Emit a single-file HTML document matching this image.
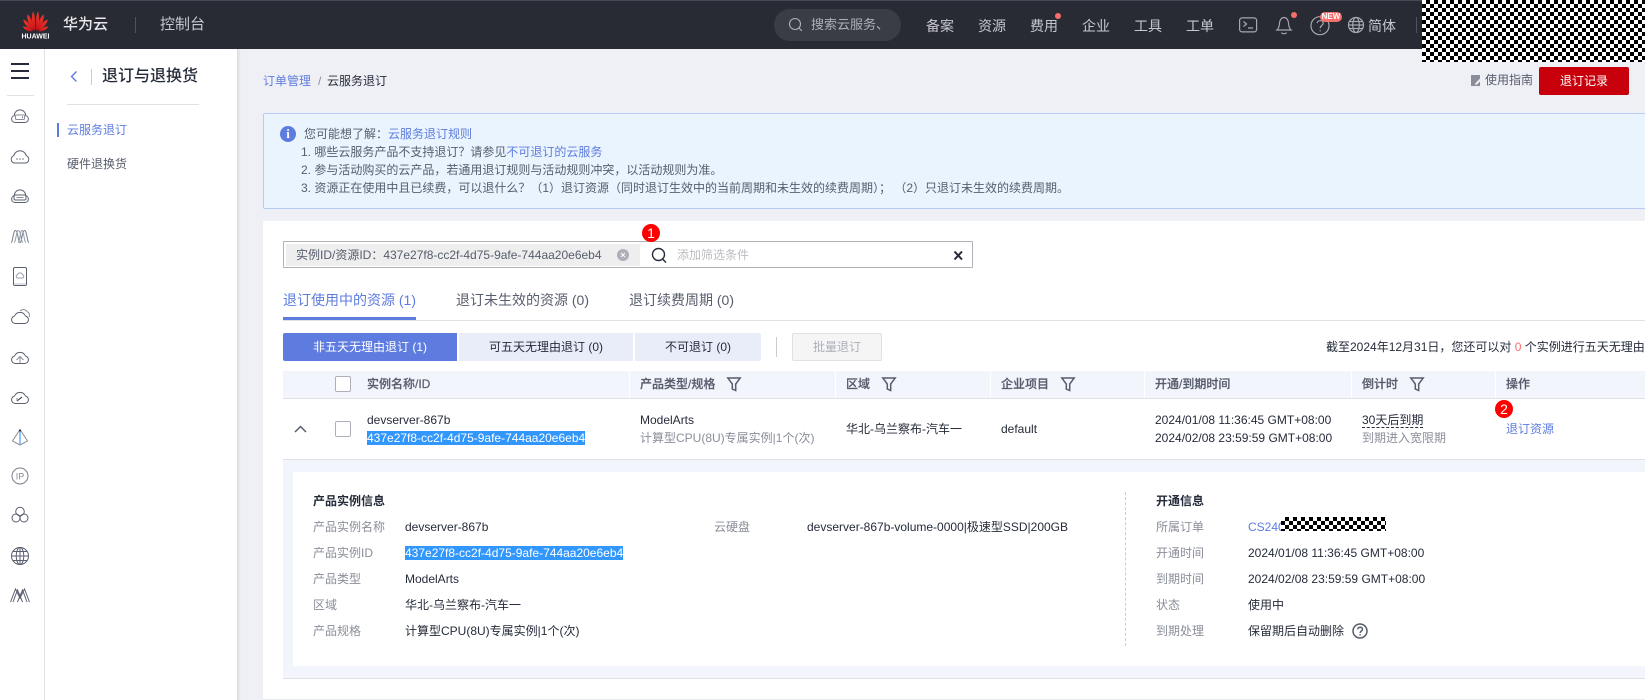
<!DOCTYPE html>
<html lang="zh"><head><meta charset="utf-8"><title>退订与退换货</title>
<style>
*{box-sizing:border-box}
html,body{margin:0;padding:0;width:1645px;height:700px;overflow:hidden;background:#eff0f5;font-family:"Liberation Sans","Noto Sans CJK SC",sans-serif;font-size:12px;color:#252b3a}
.a{position:absolute}
.t{position:absolute;white-space:nowrap;line-height:20px;font-size:12px}
.n{color:#c6c8ce;font-size:14px;top:16px}
.g{color:#8a8e99}
.l{color:#5e7ce0}
.h{color:#575d6c;font-weight:500;top:374px;-webkit-text-stroke:.2px #575d6c}
.s{background:#3297fd;color:#fff;line-height:14px;height:14px;position:absolute;white-space:nowrap;font-size:12px;overflow:hidden}
.chk{position:absolute;width:16px;height:16px;border:1px solid #adb0b8;border-radius:2px;background:#fff}
.sep{position:absolute;top:371px;width:1px;height:27px;background:#fff}
.bd{position:absolute;width:18px;height:18px;border-radius:50%;background:#f00;color:#fff;text-align:center;line-height:18px;font-size:14px;font-weight:400}
.chkr{background:repeating-conic-gradient(#000 0 25%,#fff 0 50%) 0 0/8px 8px}
.f{position:absolute;top:377px}
svg{position:absolute;overflow:visible}
</style></head><body>

<!-- header -->
<div class="a" style="left:0;top:0;width:1645px;height:49px;background:#282b33;border-top:1px solid #454852"></div>
<svg style="left:0;top:0" width="60" height="49">
<defs><linearGradient id="hw" x1="0" y1="0" x2="0" y2="1"><stop offset="0" stop-color="#ef3b2c"/><stop offset="1" stop-color="#c3121a"/></linearGradient></defs>
<g fill="url(#hw)" transform="translate(35.5 31)">
<path d="M-.6 0C-3.8-5-4.6-12-2.6-19.5-.4-17-.1-8-.6 0z"/>
<path d="M.6 0C3.8-5 4.6-12 2.6-19.5.4-17 .1-8 .6 0z"/>
<path d="M-1.6-.5C-6.2-4-8.6-10-8.2-16.5-4.6-14.5-2-6-1.6-.5z"/>
<path d="M1.6-.5C6.2-4 8.6-10 8.2-16.5 4.6-14.5 2-6 1.6-.5z"/>
<path d="M-2.4-.2C-7-2-11-6-12.4-11.5-8-10.5-4-4-2.4-.2z"/>
<path d="M2.4-.2C7-2 11-6 12.4-11.5 8-10.5 4-4 2.4-.2z"/>
<path d="M-3 .2C-7 .8-11-1-12.8-4.5-9-4.6-5-2-3 .2z"/>
<path d="M3 .2C7 .8 11-1 12.8-4.5 9-4.6 5-2 3 .2z"/>
</g>
<text x="35.5" y="38.5" fill="#fff" font-size="7" font-weight="700" text-anchor="middle" font-family="Liberation Sans">HUAWEI</text>
</svg>
<div class="t" style="left:63px;top:15px;font-size:15px;color:#e8e9ec;font-weight:500">华为云</div>
<div class="a" style="left:135px;top:17px;width:1px;height:16px;background:#50535c"></div>
<div class="t" style="left:160px;top:15px;font-size:15px;color:#c6c8ce">控制台</div>

<div class="a" style="left:774px;top:9px;width:127px;height:32px;border-radius:16px;background:#3a3d46"></div>
<svg style="left:788px;top:17px" width="16" height="16" fill="none" stroke="#b0b2b8" stroke-width="1.1"><circle cx="7" cy="7" r="5.5"/><path d="M11 11l3 3"/></svg>
<div class="t" style="left:811px;top:15px;font-size:13px;color:#adb0b8">搜索云服务、</div>
<div class="t n" style="left:926px">备案</div>
<div class="t n" style="left:978px">资源</div>
<div class="t n" style="left:1030px">费用</div>
<div class="a" style="left:1055px;top:13px;width:6px;height:6px;border-radius:50%;background:#f66f6a"></div>
<div class="t n" style="left:1082px">企业</div>
<div class="t n" style="left:1134px">工具</div>
<div class="t n" style="left:1186px">工单</div>
<svg style="left:1235px;top:5px" width="135" height="40" fill="none" stroke="#a6a8ae" stroke-width="1.2">
<rect x="4.6" y="12.9" width="17" height="14" rx="2.5"/><path d="M8.5 16.500l3 2.500-3 2.500M13 23h5"/>
<path d="M42 25h14c-2-1.500-2.300-4-2.500-7-.2-3-2-5.500-4.500-5.500s-4.300 2.500-4.500 5.500c-.2 3-.5 5.500-2.500 7zM46.500 27.500c.5 1.600 4.500 1.600 5 0"/>
<circle cx="85" cy="20.700" r="9"/><path d="M82.200 18.200c.3-3.500 6-3.500 6 0 0 2.300-3 2.300-3 5M85.200 25.200v1.200"/>
<circle cx="121" cy="20" r="7.500"/><ellipse cx="121" cy="20" rx="3.300" ry="7.500"/><path d="M113.500 20h15M114.500 16.500h13M114.500 23.500h13"/>
</svg>
<div class="a" style="left:1291px;top:12px;width:6px;height:6px;border-radius:50%;background:#f66f6a"></div>
<div class="a" style="left:1320px;top:12px;width:22px;height:10px;border-radius:5px;background:#f66f6a;color:#fff;font-size:8px;font-weight:700;line-height:10px;text-align:center">NEW</div>
<div class="t n" style="left:1368px">简体</div>
<div class="a" style="left:1416px;top:17px;width:1px;height:16px;background:#50535c"></div>
<div class="a chkr" style="left:1422px;top:0;width:223px;height:62px"></div>

<!-- rail + sidebar -->
<div class="a" style="left:0;top:49px;width:237px;height:651px;background:#fff"></div>
<div class="a" style="left:237px;top:49px;width:4px;height:651px;background:linear-gradient(90deg,#dcdde3,#eff0f5)"></div>
<div class="a" style="left:44px;top:49px;width:1px;height:651px;background:#dfe1e6"></div>
<div class="a" style="left:11px;top:63px;width:18px;height:2px;background:#252b3a"></div>
<div class="a" style="left:11px;top:70px;width:18px;height:2px;background:#252b3a"></div>
<div class="a" style="left:11px;top:77px;width:18px;height:2px;background:#252b3a"></div>
<div class="a" style="left:7px;top:95px;width:27px;height:1px;background:#dfe1e6"></div>

<svg style="left:0;top:0" width="44" height="700" fill="none" stroke="#5a6070" stroke-width="1">
<g transform="translate(11 109)"><path d="M4 13.500a3.500 3.500 0 0 1-.7-6.900a5.700 5.700 0 0 1 11.400 0a3.500 3.500 0 0 1-.7 6.900z"/><rect x="4.500" y="6" width="9" height="4.500" rx="1" stroke="#8a8e99"/><path d="M11 8.200h1" stroke="#252b3a"/></g>
<g transform="translate(10 149.500)"><path d="M4.500 13.500a3.800 3.800 0 0 1-.8-7.300a6.500 6.500 0 0 1 12.600 0a3.800 3.800 0 0 1-.8 7.300z"/><path d="M6.500 9.500h1M9.500 9.500h1M12.500 9.500h1" stroke-width="1.500"/></g>
<g transform="translate(11 189)"><path d="M4 13.500a3.500 3.500 0 0 1-.7-6.900a5.700 5.700 0 0 1 11.400 0a3.500 3.500 0 0 1-.7 6.900z"/><rect x="3" y="6" width="12" height="5" rx="1.500"/><path d="M5.500 8.500h7" stroke="#8a8e99"/></g>
<g transform="translate(11 229.500)" stroke="#7a8090"><path d="M0 13C2 13 2 1 4.500 1S7 13 9 13 11 1 13.500 1 16 13 18 13"/><path d="M3 13C5 13 5 1 7.500 1S10 13 12 13" stroke="#9aa0b0"/><path d="M7 13C9 13 9 1 11 1S13 13 15 13" stroke="#9aa0b0"/></g>
<g transform="translate(13 267)"><rect x=".5" y=".5" width="13" height="18" rx="1.500"/><path d="M4.500 11a1.700 1.700 0 0 1 0-3.300 2.600 2.600 0 0 1 5 0 1.700 1.700 0 0 1 0 3.300z" stroke="#9aa0b0"/><path d="M1 16h12v2H1z" fill="#dfe1e6" stroke="none"/></g>
<g transform="translate(11 309)"><path d="M4 14.500a3.800 3.800 0 0 1-.4-7.500 5.800 5.800 0 0 1 10.800 0 3.800 3.800 0 0 1-.4 7.500z"/><path d="M9 2c3-2.500 6-1.500 7.500 1 2 .8 2.500 3 1.500 5" stroke="#8a8e99"/></g>
<g transform="translate(11 349)"><path d="M4 14.500a3.800 3.800 0 0 1-.4-7.500 5.800 5.800 0 0 1 10.800 0 3.800 3.800 0 0 1-.4 7.500z"/><path d="M9 14.500V8M5.500 11L9 7.500l3.500 3.500" stroke="#8a8e99"/></g>
<g transform="translate(11 389)"><path d="M4 14.500a3.800 3.800 0 0 1-.4-7.500 5.800 5.800 0 0 1 10.800 0 3.800 3.800 0 0 1-.4 7.500z"/><path d="M6 12l5-4" stroke="#252b3a"/><path d="M6 9v3" stroke="#8a8e99"/></g>
<g transform="translate(12 429)"><path d="M8 0.500L.5 12 8 16l7.500-4z" stroke="#8a8e99"/><path d="M8 1v14" stroke="#4a9bef" stroke-width="1.200"/><circle cx="8" cy="1.500" r="1" fill="#252b3a" stroke="none"/></g>
<circle cx="20" cy="476" r="8" stroke="#7a8090"/>
<text x="20" y="479.500" text-anchor="middle" font-size="9" fill="#8a8e99" stroke="none" font-family="Liberation Sans">IP</text>
<circle cx="20" cy="511.500" r="4.300"/><circle cx="16" cy="518" r="4"/><circle cx="24" cy="518" r="4"/>
<g><circle cx="20" cy="556" r="8.500"/><ellipse cx="20" cy="556" rx="3.800" ry="8.500"/><path d="M11.500 556h17M13 551.500h14M13 560.500h14M20 547.500v17"/></g>
<path d="M10.500 602L15.500 589l4.500 9 4.500-9 5 13M13 602L17.500 590l5 12M27 602l-4.500-12-5 12" stroke="#5a6070"/>
</svg>

<svg style="left:70px;top:70px" width="10" height="14" fill="none" stroke="#5e7ce0" stroke-width="1.400"><path d="M6.500 1.500L1.500 6.500l5 5"/></svg>
<div class="a" style="left:91px;top:69px;width:1px;height:16px;background:#c9ccd2"></div>
<div class="t" style="left:102px;top:67px;font-size:16px;color:#252b3a;font-weight:500">退订与退换货</div>
<div class="a" style="left:67px;top:104px;width:132px;height:1px;background:#dfe1e6"></div>
<div class="a" style="left:57px;top:123px;width:2px;height:14px;background:#5e7ce0"></div>
<div class="t l" style="left:67px;top:120px">云服务退订</div>
<div class="t" style="left:67px;top:154px;color:#575d6c">硬件退换货</div>

<!-- main top -->
<div class="t l" style="left:263px;top:71px">订单管理</div>
<div class="t g" style="left:318px;top:71px">/</div>
<div class="t" style="left:327px;top:71px">云服务退订</div>
<svg style="left:1470px;top:74px" width="12" height="13"><path d="M1 1h9v3.500L5.500 9 5 11l2-.5 3-3V12H1z" fill="#8a8e99"/></svg>
<div class="t" style="left:1485px;top:70px;color:#575d6c">使用指南</div>
<div class="a" style="left:1539px;top:67px;width:90px;height:28px;background:#c7000b;color:#fff;text-align:center;line-height:28px;border-radius:2px">退订记录</div>

<!-- alert -->
<div class="a" style="left:263px;top:113px;width:1382px;height:96px;background:#e9f4ff;border:1px solid #b9cbf5;border-right:none;border-radius:2px 0 0 2px"></div>
<div class="a" style="left:280px;top:126px;width:16px;height:16px;border-radius:50%;background:#5e7ce0;color:#fff;font:700 13px/16px 'Liberation Serif',serif;text-align:center">i</div>
<div class="t" style="left:304px;top:124px;color:#575d6c">您可能想了解：<span class="l">云服务退订规则</span></div>
<div class="t" style="left:301px;top:142px;color:#575d6c">1. 哪些云服务产品不支持退订？请参见<span class="l">不可退订的云服务</span></div>
<div class="t" style="left:301px;top:160px;color:#575d6c">2. 参与活动购买的云产品，若通用退订规则与活动规则冲突，以活动规则为准。</div>
<div class="t" style="left:301px;top:178px;color:#575d6c">3. 资源正在使用中且已续费，可以退什么？（1）退订资源（同时退订生效中的当前周期和未生效的续费周期）； （2）只退订未生效的续费周期。</div>

<!-- panel -->
<div class="a" style="left:263px;top:221px;width:1382px;height:479px;background:#fff"></div>
<div class="a" style="left:283px;top:241px;width:690px;height:27px;border:1px solid #b0b2b8;border-radius:1px;background:#fff"></div>
<div class="a" style="left:286px;top:244px;width:354px;height:22px;background:#eeeeee"></div>
<div class="t" style="left:296px;top:245px;color:#575d6c">实例ID/资源ID：437e27f8-cc2f-4d75-9afe-744aa20e6eb4</div>
<svg style="left:617px;top:249px" width="12" height="12"><circle cx="6" cy="6" r="6" fill="#adb0b8"/><path d="M4 4l4 4M8 4l-4 4" stroke="#fff" stroke-width="1"/></svg>
<svg style="left:651px;top:247px" width="17" height="17" fill="none" stroke="#252b3a" stroke-width="1.400"><circle cx="7.500" cy="7.500" r="6"/><path d="M11.500 12l3.500 3.500"/></svg>
<div class="t" style="left:677px;top:245px;color:#bbbdc2">添加筛选条件</div>
<svg style="left:953px;top:250px" width="11" height="11" stroke="#252b3a" stroke-width="2"><path d="M1.500 1.500l7.500 8M9 1.500l-7.500 8"/></svg>
<div class="bd" style="left:642px;top:224px">1</div>

<div class="t" style="left:283px;top:290px;font-size:14px;color:#5e7ce0">退订使用中的资源 (1)</div>
<div class="t" style="left:456px;top:290px;font-size:14px;color:#575d6c">退订未生效的资源 (0)</div>
<div class="t" style="left:629px;top:290px;font-size:14px;color:#575d6c">退订续费周期 (0)</div>
<div class="a" style="left:283px;top:320px;width:1362px;height:1px;background:#dfe1e6"></div>
<div class="a" style="left:283px;top:317px;width:133px;height:3px;background:#5e7ce0"></div>

<div class="a" style="left:283px;top:333px;width:174px;height:28px;background:#5e7ce0;color:#fff;text-align:center;line-height:28px;border-radius:2px 0 0 2px">非五天无理由退订 (1)</div>
<div class="a" style="left:459px;top:333px;width:174px;height:28px;background:#e9edfa;color:#252b3a;text-align:center;line-height:28px">可五天无理由退订 (0)</div>
<div class="a" style="left:635px;top:333px;width:126px;height:28px;background:#e9edfa;color:#252b3a;text-align:center;line-height:28px;border-radius:0 2px 2px 0">不可退订 (0)</div>
<div class="a" style="left:776px;top:337px;width:1px;height:20px;background:#c9ccd2"></div>
<div class="a" style="left:792px;top:333px;width:90px;height:28px;background:#f5f5f6;border:1px solid #dfe1e6;color:#adb0b8;text-align:center;line-height:26px;border-radius:2px">批量退订</div>
<div class="t" style="left:1326px;top:337px;color:#252b3a">截至2024年12月31日，您还可以对 <span style="color:#f66f6a">0</span> 个实例进行五天无理由退订</div>

<!-- table head -->
<div class="a" style="left:283px;top:371px;width:1362px;height:27px;background:#f2f5fc"></div>
<div class="a" style="left:283px;top:398px;width:1362px;height:1px;background:#dfe1e6"></div>
<div class="sep" style="left:629px"></div><div class="sep" style="left:835px"></div><div class="sep" style="left:990px"></div><div class="sep" style="left:1144px"></div><div class="sep" style="left:1351px"></div><div class="sep" style="left:1495px"></div>
<div class="chk" style="left:335px;top:376px"></div>
<div class="t h" style="left:367px">实例名称/ID</div>
<div class="t h" style="left:640px">产品类型/规格</div>
<div class="t h" style="left:846px">区域</div>
<div class="t h" style="left:1001px">企业项目</div>
<div class="t h" style="left:1155px">开通/到期时间</div>
<div class="t h" style="left:1362px">倒计时</div>
<div class="t h" style="left:1506px">操作</div>
<svg class="f" style="left:727px" width="14" height="15" fill="none" stroke="#575d6c" stroke-width="1.500"><path d="M.8 1h12.400L8.700 7v6.500L5.300 12V7z"/></svg>
<svg class="f" style="left:882px" width="14" height="15" fill="none" stroke="#575d6c" stroke-width="1.500"><path d="M.8 1h12.400L8.700 7v6.500L5.300 12V7z"/></svg>
<svg class="f" style="left:1061px" width="14" height="15" fill="none" stroke="#575d6c" stroke-width="1.500"><path d="M.8 1h12.400L8.700 7v6.500L5.300 12V7z"/></svg>
<svg class="f" style="left:1410px" width="14" height="15" fill="none" stroke="#575d6c" stroke-width="1.500"><path d="M.8 1h12.400L8.700 7v6.500L5.300 12V7z"/></svg>

<!-- row -->
<svg style="left:294px;top:425px" width="13" height="8" fill="none" stroke="#575d6c" stroke-width="1.500"><path d="M1 7l5.500-5.500L12 7"/></svg>
<div class="chk" style="left:335px;top:421px"></div>
<div class="t" style="left:367px;top:410px">devserver-867b</div>
<div class="s" style="left:367px;top:431px;width:218px">437e27f8-cc2f-4d75-9afe-744aa20e6eb4</div>
<div class="t" style="left:640px;top:410px">ModelArts</div>
<div class="t g" style="left:640px;top:428px">计算型CPU(8U)专属实例|1个(次)</div>
<div class="t" style="left:846px;top:419px">华北-乌兰察布-汽车一</div>
<div class="t" style="left:1001px;top:419px">default</div>
<div class="t" style="left:1155px;top:410px">2024/01/08 11:36:45 GMT+08:00</div>
<div class="t" style="left:1155px;top:428px">2024/02/08 23:59:59 GMT+08:00</div>
<div class="t" style="left:1362px;top:410px">30天后到期</div>
<div class="a" style="left:1362px;top:427px;width:61px;border-top:1px dashed #252b3a"></div>
<div class="t g" style="left:1362px;top:428px">到期进入宽限期</div>
<div class="t l" style="left:1506px;top:419px">退订资源</div>
<div class="bd" style="left:1495px;top:400px">2</div>
<div class="a" style="left:283px;top:459px;width:1362px;height:1px;background:#dfe1e6"></div>

<!-- expanded -->
<div class="a" style="left:283px;top:460px;width:1362px;height:218px;background:#f2f5fc"></div>
<div class="a" style="left:293px;top:472px;width:1352px;height:194px;background:#fff"></div>
<div class="a" style="left:283px;top:678px;width:1362px;height:1px;background:#dfe1e6"></div>
<div class="a" style="left:263px;top:699px;width:1382px;height:1px;background:#e9eaee"></div>

<div class="t" style="left:313px;top:491px;font-weight:700">产品实例信息</div>
<div class="t g" style="left:313px;top:517px">产品实例名称</div>
<div class="t" style="left:405px;top:517px">devserver-867b</div>
<div class="t g" style="left:714px;top:517px">云硬盘</div>
<div class="t" style="left:807px;top:517px">devserver-867b-volume-0000|极速型SSD|200GB</div>
<div class="t g" style="left:313px;top:543px">产品实例ID</div>
<div class="s" style="left:405px;top:546px;width:218px">437e27f8-cc2f-4d75-9afe-744aa20e6eb4</div>
<div class="t g" style="left:313px;top:569px">产品类型</div>
<div class="t" style="left:405px;top:569px">ModelArts</div>
<div class="t g" style="left:313px;top:595px">区域</div>
<div class="t" style="left:405px;top:595px">华北-乌兰察布-汽车一</div>
<div class="t g" style="left:313px;top:621px">产品规格</div>
<div class="t" style="left:405px;top:621px">计算型CPU(8U)专属实例|1个(次)</div>

<div class="a" style="left:1125px;top:492px;height:154px;border-left:1px dashed #c9ccd2"></div>
<div class="t" style="left:1156px;top:491px;font-weight:700">开通信息</div>
<div class="t g" style="left:1156px;top:517px">所属订单</div>
<div class="t l" style="left:1248px;top:517px">CS240</div>
<div class="a chkr" style="left:1281px;top:517px;width:105px;height:14px"></div>
<div class="t g" style="left:1156px;top:543px">开通时间</div>
<div class="t" style="left:1248px;top:543px">2024/01/08 11:36:45 GMT+08:00</div>
<div class="t g" style="left:1156px;top:569px">到期时间</div>
<div class="t" style="left:1248px;top:569px">2024/02/08 23:59:59 GMT+08:00</div>
<div class="t g" style="left:1156px;top:595px">状态</div>
<div class="t" style="left:1248px;top:595px">使用中</div>
<div class="t g" style="left:1156px;top:621px">到期处理</div>
<div class="t" style="left:1248px;top:621px">保留期后自动删除</div>
<svg style="left:1352px;top:623px" width="16" height="16" fill="none" stroke="#575d6c" stroke-width="1.500"><circle cx="8" cy="8" r="7"/><path d="M5.700 6.300c.2-2.800 4.800-2.800 4.800 0 0 1.900-2.400 1.800-2.400 3.700M8.100 11.200v1.300"/></svg>

</body></html>
